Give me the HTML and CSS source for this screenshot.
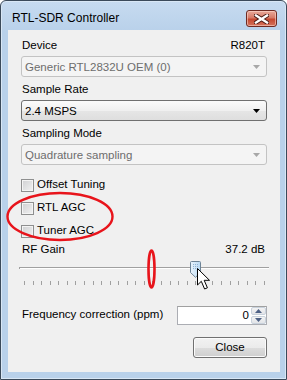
FILE: index.html
```html
<!DOCTYPE html>
<html>
<head>
<meta charset="utf-8">
<link rel="stylesheet" href="styles.css">
</head>
<body>
<div class="window">
  <div class="titlebar">
    <span class="title">RTL-SDR Controller</span>
    <div class="close-x">
      <svg width="15" height="10" viewBox="0 0 15 10"><path d="M2,1.5 L13,8.5 M13,1.5 L2,8.5" stroke="#4a1a14" stroke-width="4.2" stroke-linecap="square"/><path d="M2,1.5 L13,8.5 M13,1.5 L2,8.5" stroke="#ffffff" stroke-width="2.4" stroke-linecap="square"/></svg>
    </div>
  </div>
  <div class="client">
    <div class="field">
      <div class="label-row"><span>Device</span><span>R820T</span></div>
      <div class="combo disabled"><span>Generic RTL2832U OEM (0)</span><svg class="arrow" width="7" height="4" viewBox="0 0 7 4"><path d="M0,0 H7 L3.5,4 Z" fill="#a7a7a7"/></svg></div>
    </div>
    <div class="field">
      <div class="label-row"><span>Sample Rate</span></div>
      <div class="combo"><span>2.4 MSPS</span><svg class="arrow" width="7" height="4" viewBox="0 0 7 4"><path d="M0,0 H7 L3.5,4 Z" fill="#000"/></svg></div>
    </div>
    <div class="field">
      <div class="label-row"><span>Sampling Mode</span></div>
      <div class="combo disabled"><span>Quadrature sampling</span><svg class="arrow" width="7" height="4" viewBox="0 0 7 4"><path d="M0,0 H7 L3.5,4 Z" fill="#a7a7a7"/></svg></div>
    </div>
    <div class="checks">
      <div class="check"><span class="box"></span><span>Offset Tuning</span></div>
      <div class="check"><span class="box"></span><span>RTL AGC</span></div>
      <div class="check"><span class="box"></span><span>Tuner AGC</span></div>
    </div>
    <div class="label-row gain"><span>RF Gain</span><span>37.2 dB</span></div>
    <div class="slider">
      <div class="track"></div>
      <div class="ticks">
        <i></i><i></i><i></i><i></i><i></i><i></i><i></i><i></i><i></i><i></i>
        <i></i><i></i><i></i><i></i><i></i><i></i><i></i><i></i><i></i><i></i>
        <i></i><i></i><i></i><i></i><i></i><i></i><i></i><i></i><i></i>
      </div>
      <svg class="thumb" style="left:171px" width="11" height="17" viewBox="0 0 11 17">
        <defs><linearGradient id="tg" x1="0" y1="0" x2="1" y2="0"><stop offset="0" stop-color="#eaf4fc"/><stop offset="1" stop-color="#b9d9f3"/></linearGradient></defs>
        <path d="M0.5,1.5 Q0.5,0.5 1.5,0.5 H9.5 Q10.5,0.5 10.5,1.5 V11.5 L5.5,16.3 L0.5,11.5 Z" fill="url(#tg)" stroke="#6d8396"/>
        <g fill="#8fb2d3"><rect x="3" y="3" width="1" height="1"/><rect x="5" y="3" width="1" height="1"/><rect x="7" y="3" width="1" height="1"/><rect x="3" y="5" width="1" height="1"/><rect x="5" y="5" width="1" height="1"/><rect x="7" y="5" width="1" height="1"/><rect x="3" y="7" width="1" height="1"/><rect x="5" y="7" width="1" height="1"/><rect x="7" y="7" width="1" height="1"/></g>
      </svg>
    </div>
    <div class="freq-row">
      <span class="freq-label">Frequency correction (ppm)</span>
      <div class="numeric">
        <span class="num-value">0</span>
        <div class="spin">
          <div class="spin-btn"><svg width="7" height="4" viewBox="0 0 7 4"><path d="M0,4 H7 L3.5,0 Z" fill="#4d6185"/></svg></div>
          <div class="spin-btn"><svg width="7" height="4" viewBox="0 0 7 4"><path d="M0,0 H7 L3.5,4 Z" fill="#4d6185"/></svg></div>
        </div>
      </div>
    </div>
    <div class="button-row"><div class="button">Close</div></div>
  </div>
  <svg class="annotations" width="287" height="380" viewBox="0 0 287 380">
    <ellipse cx="60" cy="216.5" rx="52.5" ry="23.5" fill="none" stroke="#e8141b" stroke-width="2.4"/>
    <ellipse cx="151.5" cy="269" rx="3" ry="18.5" fill="none" stroke="#e8141b" stroke-width="2.6"/>
    <path d="M197.5,268.5 V285 L201.3,281.3 L204.6,289 L207.4,287.8 L204.2,280.3 L209.5,280.3 Z" fill="#fff" stroke="#000" stroke-width="1" stroke-linejoin="miter"/>
  </svg>
</div>
</body>
</html>
```
FILE: styles.css
```css
html, body {
  margin: 0;
  padding: 0;
  background: #ffffff;
}
body {
  width: 287px;
  height: 380px;
  overflow: hidden;
  font-family: "Liberation Sans", Arial, sans-serif;
  font-size: 11.5px;
  color: #000;
}
.window {
  position: relative;
  box-sizing: border-box;
  width: 287px;
  height: 380px;
  border: 1px solid #3b4a5a;
  border-radius: 6px 6px 0 0;
  background: linear-gradient(#c7dbf0, #b9d1ea 30px, #b9d1ea);
  box-shadow: inset 0 0 0 1px #d9e7f5;
  display: flex;
  flex-direction: column;
}
.titlebar {
  height: 29px;
  display: flex;
  align-items: flex-start;
  flex: none;
}
.title {
  padding: 10px 0 0 11px;
  line-height: 14px;
  font-size: 12px;
  color: #000;
}
.close-x {
  margin: 9px 9px 0 auto;
  box-sizing: border-box;
  width: 31px;
  height: 17px;
  border: 1px solid #6e2a22;
  border-radius: 3px;
  background: linear-gradient(#e9a99a, #d67a67 45%, #c5472f 55%, #d4735d);
  box-shadow: inset 0 0 0 1px rgba(255,220,210,0.55);
  display: flex;
  align-items: center;
  justify-content: center;
}
.client {
  box-sizing: border-box;
  margin: 0 6px 0 7px;
  height: 342px;
  background: #f0f0f0;
  padding: 8px 13px 0 13px;
  display: flex;
  flex-direction: column;
}
.field {
  display: flex;
  flex-direction: column;
  gap: 4px;
}
.field + .field {
  margin-top: 5px;
}
.label-row {
  display: flex;
  justify-content: space-between;
  line-height: 14px;
  height: 14px;
  padding: 0 2px 0 1px;
  white-space: nowrap;
}
.combo {
  box-sizing: border-box;
  height: 21px;
  border: 1px solid #707070;
  border-radius: 3px;
  background: linear-gradient(#fbfbfb, #f0f0f0 50%, #e6e6e6 50%, #dedede);
  display: flex;
  align-items: center;
  justify-content: space-between;
  padding: 0 6px 0 3px;
  line-height: 14px;
}
.combo.disabled {
  border-color: #c3c3c3;
  background: #f4f4f4;
  color: #6d6d6d;
}
.arrow {
  display: block;
}
.checks {
  margin-top: 12px;
  display: flex;
  flex-direction: column;
  gap: 8px;
}
.check {
  display: flex;
  align-items: flex-start;
  gap: 3px;
  height: 15px;
  line-height: 14px;
}
.box {
  box-sizing: border-box;
  width: 13px;
  height: 13px;
  margin-top: 2px;
  border: 1px solid #8e8f8f;
  background: linear-gradient(135deg, #cfd0d2, #f2f2f2);
  box-shadow: inset 0 0 0 1px #f4f4f4;
  flex: none;
}
.gain {
  margin-top: 4px;
}
.slider {
  position: relative;
  margin: 2px -2px 0 -2px;
  height: 32px;
}
.track {
  position: absolute;
  left: 0;
  right: 0;
  top: 9px;
  height: 2px;
  border-top: 1px solid #a0a0a0;
  border-left: 1px solid #a0a0a0;
  background: #ffffff;
  box-sizing: border-box;
}
.ticks {
  position: absolute;
  left: 5px;
  right: 4px;
  top: 23px;
  display: flex;
  justify-content: space-between;
}
.ticks i {
  display: block;
  width: 1px;
  height: 4px;
  background: #a0a0a0;
}
.thumb {
  position: absolute;
  top: 3px;
}
.freq-row {
  margin-top: 16px;
  display: flex;
  justify-content: space-between;
  align-items: flex-start;
  height: 19px;
}
.freq-label {
  margin: 1px 0 0 1px;
  line-height: 14px;
  white-space: nowrap;
}
.numeric {
  box-sizing: border-box;
  width: 90px;
  height: 19px;
  border: 1px solid #abadb3;
  border-top-color: #a0a0a0;
  background: #ffffff;
  display: flex;
  align-items: stretch;
}
.num-value {
  flex: 1;
  text-align: right;
  line-height: 17px;
  padding-right: 2px;
}
.spin {
  width: 15px;
  display: flex;
  flex-direction: column;
  gap: 1px;
}
.spin-btn {
  flex: 1;
  border: 1px solid #c9d2dc;
  border-radius: 2px;
  background: linear-gradient(#f3f3f3, #e2e4e8);
  display: flex;
  align-items: center;
  justify-content: center;
}
.spin-btn svg {
  display: block;
}
.button-row {
  margin-top: 12px;
  display: flex;
  justify-content: flex-end;
}
.button {
  box-sizing: border-box;
  width: 74px;
  height: 21px;
  border: 1px solid #707070;
  border-radius: 3px;
  background: linear-gradient(#f2f2f2, #ebebeb 50%, #dddddd 50%, #cfcfcf);
  box-shadow: inset 0 0 0 1px #fbfbfb;
  text-align: center;
  line-height: 19px;
}
.annotations {
  position: absolute;
  left: -1px;
  top: -1px;
  pointer-events: none;
}
```
